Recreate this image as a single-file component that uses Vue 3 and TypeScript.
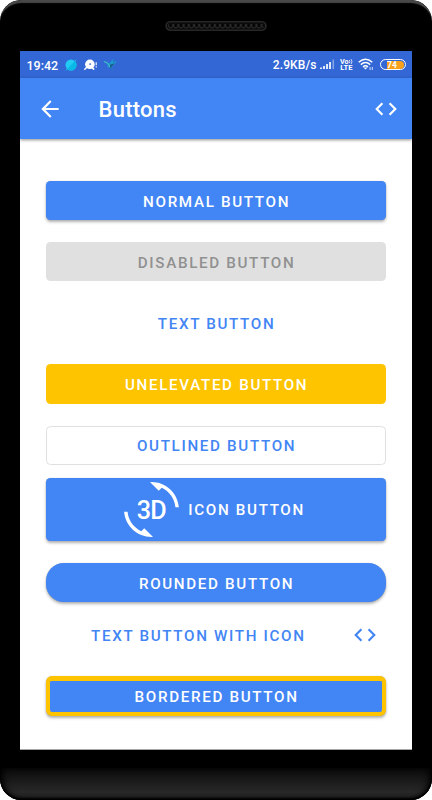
<script setup lang="ts">
interface DemoButton {
  label: string
  kind: string
  icon?: 'rotate' | 'code'
}

const buttons: DemoButton[] = [
  { label: 'NORMAL BUTTON', kind: 'normal' },
  { label: 'DISABLED BUTTON', kind: 'disabled' },
  { label: 'TEXT BUTTON', kind: 'text' },
  { label: 'UNELEVATED BUTTON', kind: 'unelevated' },
  { label: 'OUTLINED BUTTON', kind: 'outlined' },
  { label: 'ICON BUTTON', kind: 'with-icon', icon: 'rotate' },
  { label: 'ROUNDED BUTTON', kind: 'rounded' },
  { label: 'TEXT BUTTON WITH ICON', kind: 'text-icon', icon: 'code' },
  { label: 'BORDERED BUTTON', kind: 'bordered' },
]
const codePath =
  'M9.4 16.6 4.8 12l4.6-4.6L8 6l-6 6 6 6 1.4-1.4zm5.2 0 4.6-4.6-4.6-4.6L16 6l6 6-6 6-1.4-1.4z'
</script>

<template>
  <div class="phone">
    <div class="top-bezel">
      <svg class="speaker" width="102" height="10" viewBox="0 0 102 10">
        <defs>
          <pattern id="grille" width="5.2" height="6" patternUnits="userSpaceOnUse" x="3" y="2">
            <path d="M.6 1v2.5q2 3 4 0V1" fill="#050505" stroke="#303030" stroke-width="0.9" />
          </pattern>
        </defs>
        <rect x="1" y="0.75" width="100" height="8.5" rx="4.25" fill="#0c0c0c" stroke="#343434" stroke-width="1.2" />
        <rect x="3" y="2" width="96" height="6" rx="3" fill="url(#grille)" />
      </svg>
    </div>

    <main class="screen">
      <div class="status">
        <span class="time">19:42</span>
        <svg class="planet" width="12" height="12" viewBox="0 0 12 12">
          <circle cx="6" cy="6" r="5.5" fill="#22cbf4" />
          <path d="M2.1 9.9 9.9 2.1A5.5 5.5 0 0 1 2.1 9.9Z" fill="#0ab9e6" />
          <path d="M.6 11.4 2.4 9.6M9.6 2.4 11.4.6" stroke="#19bdea" />
        </svg>
        <svg class="chat" width="13" height="12" viewBox="0 0 13 12">
          <circle cx="5.9" cy="5.3" r="4.8" fill="#fff" />
          <path d="M2.8 8.2.8 10.2M8.2 8.6l1.5 1.5" stroke="#fff" stroke-width="1.5" stroke-linecap="round" />
          <circle cx="6.1" cy="5.1" r="0.9" fill="#3367d6" />
          <path d="M12.2 3.2v3M12.2 7.2v1.3" stroke="#fff" stroke-width="1.1" />
        </svg>
        <svg class="bird" width="14" height="13" viewBox="0 0 14 13">
          <path d="m0 3.4 4 .3L6.2 5.4 10.6.6 10 4.3 14 3.1 11.4 6.4 8.6 9l1.5 3.4-3.2-2.6-3-.7 1.2-1.7L3 5Z" fill="#1c9ad0" />
          <path d="m7.2 6.4 3-.6 2-1.2L10.2 7 8 9.2 10 12 6.6 9Z" fill="#1c5b88" />
          <path d="m1 3.7 2.8.8 2.2 2.4.6 2" fill="none" stroke="#55bcc4" />
        </svg>
        <span class="speed">2.9KB/s</span>
        <svg class="signal" width="15" height="11" viewBox="0 0 15 11">
          <path d="M1 10V8.4M4 10V7M7 10V5M10 10V3" stroke="#f2f6ff" stroke-width="1.8" />
          <path d="M13.3 10V.5" stroke="#86a6e8" stroke-width="1.5" />
        </svg>
        <svg class="volte" width="13" height="13" viewBox="0 0 13 13" fill="#fff">
          <text x="0" y="5.8" textLength="8.6" lengthAdjust="spacingAndGlyphs">Vo</text>
          <path d="M9.3 2q1.2 1.5 0 3.2M11 1.2q2 2.4 0 4.8" fill="none" stroke="#fff" stroke-width=".8" />
          <text x="0.3" y="12.4" textLength="12.2" lengthAdjust="spacingAndGlyphs">LTE</text>
        </svg>
        <svg class="wifi" width="16" height="13" viewBox="0 0 16 13">
          <path
            d="M.7 4.2q6.8-6 13.6 0M2.8 6.6q4.7-4 9.4 0M5 8.9q2.5-2.1 5 0"
            fill="none"
            stroke="#fff"
            stroke-width="1.4"
          />
          <path d="M5.5 9.6h4l-2 2Z" fill="#fff" />
          <path d="M12.1 9v3M14.3 9v3" stroke="#cfdcf9" stroke-width="1" />
        </svg>
        <span class="battery"><span class="charge">74</span></span>
      </div>

      <header class="appbar">
        <svg width="26" height="26" viewBox="0 0 24 24" fill="#fff">
          <path d="M20 11H7.83l5.59-5.59L12 4l-8 8 8 8 1.41-1.41L7.83 13H20v-2z" />
        </svg>
        <h1>Buttons</h1>
        <svg width="26" height="26" viewBox="0 0 24 24" fill="#fff"><path :d="codePath" /></svg>
      </header>

      <section class="list">
        <button
          v-for="b in buttons"
          :key="b.kind"
          type="button"
          class="btn"
          :class="b.kind"
          :disabled="b.kind === 'disabled'"
        >
          <svg v-if="b.icon === 'rotate'" class="rotate" width="55" height="55" viewBox="0 0 24 24" fill="#fff">
            <path d="M7.52 21.48C4.25 19.94 1.91 16.76 1.55 13H.05C.56 19.16 5.71 24 12 24l.66-.03-3.81-3.81-1.33 1.32z" />
            <path d="m12 0-.66.03 3.81 3.81 1.33-1.33c3.27 1.55 5.61 4.72 5.96 8.48h1.5C23.44 4.84 18.29 0 12 0z" transform="translate(0 -1.9)" class="upper" />
            <text x="11.9" y="16" text-anchor="middle">3D</text>
          </svg>
          <span class="label">{{ b.label }}</span>
          <svg v-if="b.icon === 'code'" class="code" width="26" height="26" viewBox="0 0 24 24" fill="#4285f4">
            <path :d="codePath" />
          </svg>
        </button>
      </section>
    </main>

    <div class="chin"></div>
  </div>
</template>

<style>
body {
  background: #fff;
}
</style>

<style scoped>
.phone {
  box-sizing: border-box;
  width: 432px;
  height: 800px;
  display: flex;
  flex-direction: column;
  align-items: center;
  overflow: hidden;
  border-radius: 21px;
  background: #000;
  font-family: Roboto, sans-serif;
}
.top-bezel {
  box-sizing: border-box;
  width: 100%;
  height: 51px;
  padding-top: 21px;
  display: flex;
  justify-content: center;
  align-items: flex-start;
  border-radius: 21px 21px 0 0;
  box-shadow: inset 0 4px 1px -1px #484848;
}
.speaker {
  display: block;
}
.screen {
  box-sizing: border-box;
  width: 392px;
  height: 698.5px;
  background: #fff;
  border-bottom: 1px solid #a4aaa7;
}
.status {
  box-sizing: border-box;
  height: 27px;
  padding: 0 6px 0 6.5px;
  display: flex;
  align-items: center;
  background: #3367d6;
  color: #fff;
}
.time {
  width: 38.5px;
  font-size: 12.5px;
  font-weight: 500;
  padding-top: 1px;
}
.chat {
  margin-left: 6.5px;
}
.bird {
  margin-left: 6.5px;
}
.speed {
  margin-left: auto;
  padding-top: 1px;
  font-size: 12px;
  font-weight: 500;
  letter-spacing: 0.1px;
}
.signal {
  margin-left: 3px;
}
.volte {
  margin-left: 5px;
}
.volte text {
  font: 700 7px Roboto, sans-serif;
}
.wifi {
  margin-left: 5.5px;
}
.battery {
  box-sizing: border-box;
  width: 26px;
  height: 11px;
  margin-left: 6px;
  padding: 0.5px 1px 0.5px 6px;
  border: 1.2px solid #fff;
  border-radius: 6px;
  display: flex;
}
.charge {
  width: 100%;
  border-radius: 0 4px 4px 0;
  background: #f9a11b;
  font-size: 8.5px;
  font-weight: 700;
  line-height: 8px;
}
.appbar {
  box-sizing: border-box;
  height: 61px;
  padding: 0 13px 0 17px;
  display: flex;
  align-items: center;
  background: #4285f4;
  box-shadow: 0 1px 3px rgba(0, 0, 0, 0.45);
}
.appbar h1 {
  flex: 1;
  margin: 2px 0 0 35.5px;
  color: #fff;
  font-size: 22px;
  font-weight: 500;
  letter-spacing: 0.25px;
}
.list {
  padding: 42px 26px 0;
  display: flex;
  flex-direction: column;
}
.btn {
  box-sizing: border-box;
  height: 39px;
  margin: 0 0 22px;
  padding: 2px 0 0;
  display: flex;
  align-items: center;
  justify-content: center;
  border: 0;
  border-radius: 4.5px;
  background: #4285f4;
  color: #fff;
  font: 500 15.2px/20px Roboto, sans-serif;
  letter-spacing: 1.66px;
  text-indent: 1.2px;
  white-space: nowrap;
}
.normal,
.with-icon,
.rounded,
.bordered {
  box-shadow: 0 2px 3px rgba(0, 0, 0, 0.3), 0 0 1px rgba(0, 0, 0, 0.25);
}
.disabled {
  background: #e0e0e0;
  color: #909090;
}
.text,
.text-icon {
  background: transparent;
  color: #4285f4;
}
.unelevated {
  height: 40px;
  background: #ffc400;
}
.outlined {
  margin-bottom: 13px;
  padding-top: 0;
  border: 1px solid #e0e0e0;
  background: #fff;
  color: #4285f4;
}
.with-icon {
  height: 63px;
  padding: 0 3px 0 0;
  gap: 8px;
}
.rotate {
  overflow: visible;
  text-indent: 0;
}
.rotate .upper {
  transform: none;
}
.rotate text {
  font: 500 11px Roboto, sans-serif;
  letter-spacing: -0.4px;
}
.rounded {
  margin-bottom: 14px;
  border-radius: 18px;
}
.text-icon {
  margin-bottom: 21px;
  padding: 0 8.5px 0 0;
}
.text-icon .label {
  flex: 1;
  padding-right: 2px;
}
.text-icon .code {
  margin-bottom: 1px;
}
.bordered {
  height: 40px;
  margin: 0;
  padding-top: 0;
  border: 4px solid #ffc400;
  border-top-width: 5px;
  border-radius: 6px;
}
.chin {
  width: 100%;
  height: 32px;
  margin-top: auto;
  border-radius: 0 0 21px 21px;
  background: linear-gradient(#0b0b0b, #282828 75%, #202020);
  box-shadow: inset 0 -2px 2px #000, inset 5px 0 7px -2px #000, inset -5px 0 7px -2px #000;
}
</style>
